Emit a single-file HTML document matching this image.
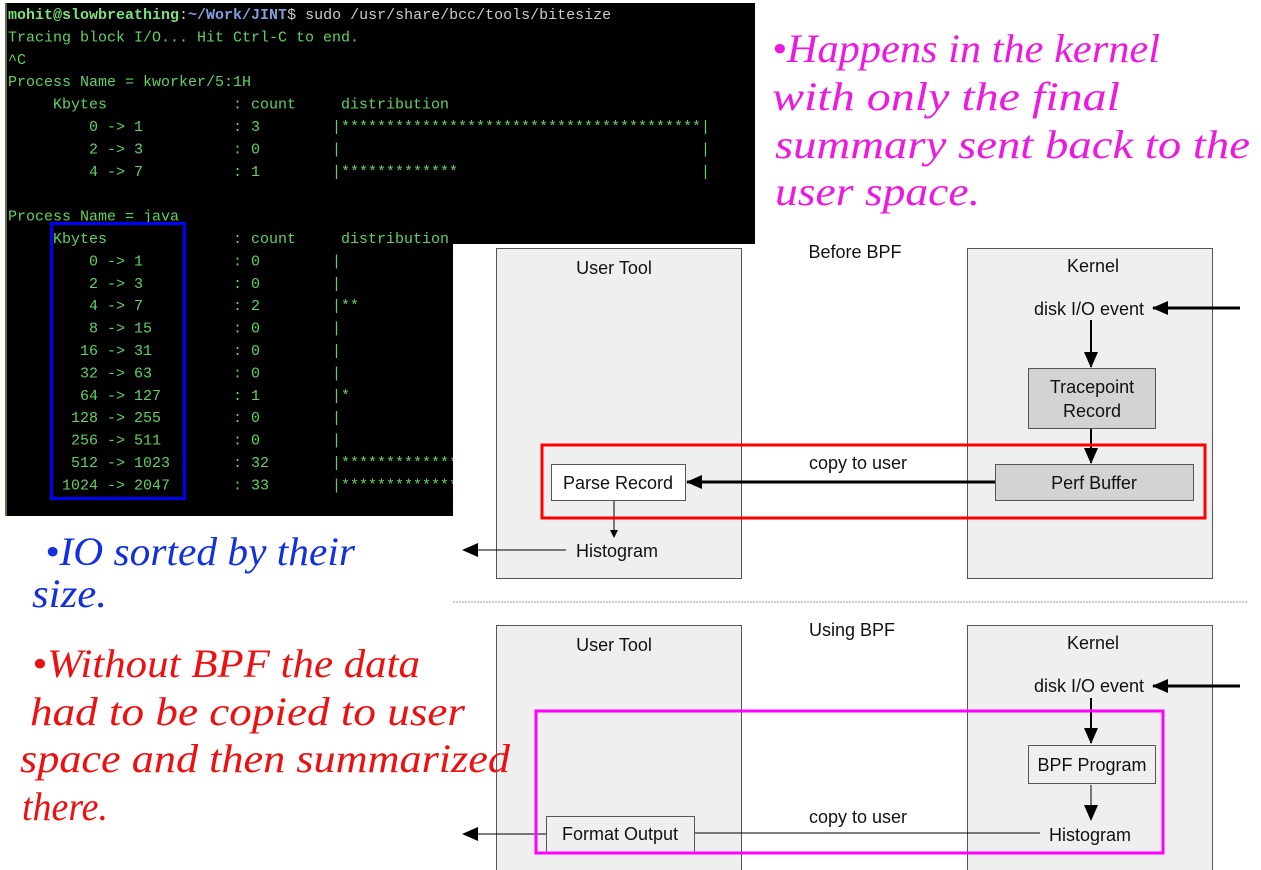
<!DOCTYPE html>
<html><head><meta charset="utf-8"><style>
html,body{margin:0;padding:0;background:#fff;}
svg{display:block}
.t text{font-family:"Liberation Mono",monospace;font-size:15px;fill:#5fd35f}
.d{font-family:"Liberation Sans",sans-serif;font-size:18px;fill:#111}
.h{font-family:"Liberation Serif",serif;font-style:italic;font-size:40px}
</style></head><body>
<svg width="1261" height="870" viewBox="0 0 1261 870" xmlns="http://www.w3.org/2000/svg">
<rect x="0" y="0" width="1261" height="870" fill="#fff"/>
<rect x="5" y="3" width="750" height="240" fill="#000"/>
<rect x="5" y="200" width="448" height="316" fill="#000"/>
<rect x="5" y="3" width="2" height="513" fill="#6a6a40"/>
<g class="t">
<text x="8" y="19"><tspan fill="#7de27d" font-weight="bold">mohit@slowbreathing</tspan><tspan fill="#ccc">:</tspan><tspan fill="#7f9fdc" font-weight="bold">~/Work/JINT</tspan><tspan fill="#ccc">$ sudo /usr/share/bcc/tools/bitesize</tspan></text>
<text x="8" y="41.4">Tracing block I/O... Hit Ctrl-C to end.</text>
<text x="8" y="63.8">^C</text>
<text x="8" y="86.2">Process Name = kworker/5:1H</text>
<text x="53" y="108.6">Kbytes</text><text x="233" y="108.6">: count</text><text x="341" y="108.6">distribution</text>
<text x="98" y="131" text-anchor="end">0</text><text x="107" y="131">-&gt;</text><text x="134" y="131">1</text><text x="233" y="131">: 3</text><text x="332" y="131">|****************************************|</text>
<text x="98" y="153.4" text-anchor="end">2</text><text x="107" y="153.4">-&gt;</text><text x="134" y="153.4">3</text><text x="233" y="153.4">: 0</text><text x="332" y="153.4">|</text><text x="701" y="153.4">|</text>
<text x="98" y="175.8" text-anchor="end">4</text><text x="107" y="175.8">-&gt;</text><text x="134" y="175.8">7</text><text x="233" y="175.8">: 1</text><text x="332" y="175.8">|*************</text><text x="701" y="175.8">|</text>
<text x="8" y="220.6">Process Name = java</text>
<text x="53" y="243">Kbytes</text><text x="233" y="243">: count</text><text x="341" y="243">distribution</text>
<g>
<text x="98" y="265.4" text-anchor="end">0</text><text x="107" y="265.4">-&gt;</text><text x="134" y="265.4">1</text><text x="233" y="265.4">: 0</text><text x="332" y="265.4">|</text>
<text x="98" y="287.8" text-anchor="end">2</text><text x="107" y="287.8">-&gt;</text><text x="134" y="287.8">3</text><text x="233" y="287.8">: 0</text><text x="332" y="287.8">|</text>
<text x="98" y="310.2" text-anchor="end">4</text><text x="107" y="310.2">-&gt;</text><text x="134" y="310.2">7</text><text x="233" y="310.2">: 2</text><text x="332" y="310.2">|**</text>
<text x="98" y="332.6" text-anchor="end">8</text><text x="107" y="332.6">-&gt;</text><text x="134" y="332.6">15</text><text x="233" y="332.6">: 0</text><text x="332" y="332.6">|</text>
<text x="98" y="355" text-anchor="end">16</text><text x="107" y="355">-&gt;</text><text x="134" y="355">31</text><text x="233" y="355">: 0</text><text x="332" y="355">|</text>
<text x="98" y="377.4" text-anchor="end">32</text><text x="107" y="377.4">-&gt;</text><text x="134" y="377.4">63</text><text x="233" y="377.4">: 0</text><text x="332" y="377.4">|</text>
<text x="98" y="399.8" text-anchor="end">64</text><text x="107" y="399.8">-&gt;</text><text x="134" y="399.8">127</text><text x="233" y="399.8">: 1</text><text x="332" y="399.8">|*</text>
<text x="98" y="422.2" text-anchor="end">128</text><text x="107" y="422.2">-&gt;</text><text x="134" y="422.2">255</text><text x="233" y="422.2">: 0</text><text x="332" y="422.2">|</text>
<text x="98" y="444.6" text-anchor="end">256</text><text x="107" y="444.6">-&gt;</text><text x="134" y="444.6">511</text><text x="233" y="444.6">: 0</text><text x="332" y="444.6">|</text>
<text x="98" y="467" text-anchor="end">512</text><text x="107" y="467">-&gt;</text><text x="134" y="467">1023</text><text x="233" y="467">: 32</text><text x="332" y="467">|**************************************</text>
<text x="98" y="489.4" text-anchor="end">1024</text><text x="107" y="489.4">-&gt;</text><text x="134" y="489.4">2047</text><text x="233" y="489.4">: 33</text><text x="332" y="489.4">|****************************************</text>
</g>
</g>
<rect x="51.5" y="223.5" width="133" height="275" fill="none" stroke="#0000ff" stroke-width="3"/>
<rect x="453" y="243" width="808" height="627" fill="#fff"/>
<rect x="453" y="243" width="302" height="1" fill="#000"/>

<defs><marker id="a" markerWidth="8" markerHeight="8" refX="7" refY="4" orient="auto" markerUnits="userSpaceOnUse"><path d="M0,0 L8,4 L0,8 z" fill="#000"/></marker>
<marker id="b" markerWidth="16" markerHeight="14" refX="15" refY="7" orient="auto" markerUnits="userSpaceOnUse"><path d="M0,0 L16,7 L0,14 z" fill="#000"/></marker></defs>

<!-- Before BPF -->
<rect x="496.5" y="248.5" width="245" height="330" fill="#efefef" stroke="#555"/>
<rect x="967.5" y="248.5" width="245" height="330" fill="#efefef" stroke="#555"/>
<text class="d" x="855" y="258" text-anchor="middle">Before BPF</text>
<text class="d" x="614" y="274" text-anchor="middle">User Tool</text>
<text class="d" x="1093" y="272" text-anchor="middle">Kernel</text>
<text class="d" x="1089" y="315" text-anchor="middle">disk I/O event</text>
<line x1="1240" y1="308" x2="1153" y2="308" stroke="#000" stroke-width="3" marker-end="url(#b)"/>
<line x1="1091" y1="320" x2="1091" y2="367" stroke="#000" stroke-width="2" marker-end="url(#b)"/>
<rect x="1028.5" y="368.5" width="127" height="60" fill="#d3d3d3" stroke="#555"/>
<text class="d" x="1092" y="393" text-anchor="middle">Tracepoint</text>
<text class="d" x="1092" y="417" text-anchor="middle">Record</text>
<line x1="1091" y1="429" x2="1091" y2="463" stroke="#000" stroke-width="2" marker-end="url(#b)"/>
<rect x="995.5" y="464.5" width="198" height="36" fill="#d3d3d3" stroke="#555"/>
<text class="d" x="1094" y="489" text-anchor="middle">Perf Buffer</text>
<rect x="551.5" y="464.5" width="134" height="36" fill="#fff" stroke="#555"/>
<text class="d" x="618" y="489" text-anchor="middle">Parse Record</text>
<line x1="995" y1="482" x2="687" y2="482" stroke="#000" stroke-width="3" marker-end="url(#b)"/>
<text class="d" x="858" y="469" text-anchor="middle" font-size="16">copy to user</text>
<line x1="614" y1="501" x2="614" y2="537" stroke="#000" stroke-width="1" marker-end="url(#a)"/>
<text class="d" x="617" y="557" text-anchor="middle">Histogram</text>
<line x1="566" y1="550" x2="463" y2="550" stroke="#000" stroke-width="1" marker-end="url(#b)"/>
<rect x="542" y="445" width="663" height="73" fill="none" stroke="#f00" stroke-width="3"/>
<line x1="453" y1="602" x2="1247" y2="602" stroke="#ccc" stroke-width="2" stroke-dasharray="2,1"/>

<!-- Using BPF -->
<rect x="496.5" y="625.5" width="245" height="260" fill="#efefef" stroke="#555"/>
<rect x="967.5" y="625.5" width="245" height="260" fill="#efefef" stroke="#555"/>
<text class="d" x="852" y="636" text-anchor="middle">Using BPF</text>
<text class="d" x="614" y="651" text-anchor="middle">User Tool</text>
<text class="d" x="1093" y="649" text-anchor="middle">Kernel</text>
<text class="d" x="1089" y="692" text-anchor="middle">disk I/O event</text>
<line x1="1240" y1="686" x2="1153" y2="686" stroke="#000" stroke-width="3" marker-end="url(#b)"/>
<line x1="1091" y1="698" x2="1091" y2="743" stroke="#000" stroke-width="2" marker-end="url(#b)"/>
<rect x="1028.5" y="745.5" width="127" height="38" fill="#efefef" stroke="#555"/>
<text class="d" x="1092" y="771" text-anchor="middle">BPF Program</text>
<line x1="1091" y1="785" x2="1091" y2="820" stroke="#000" stroke-width="1" marker-end="url(#b)"/>
<text class="d" x="1090" y="841" text-anchor="middle">Histogram</text>
<line x1="1040" y1="833" x2="694" y2="833" stroke="#000" stroke-width="1"/>
<text class="d" x="858" y="823" text-anchor="middle" font-size="16">copy to user</text>
<rect x="546.5" y="816.5" width="148" height="36" fill="#efefef" stroke="#555"/>
<text class="d" x="620" y="840" text-anchor="middle">Format Output</text>
<line x1="546" y1="834" x2="463" y2="834" stroke="#000" stroke-width="1" marker-end="url(#b)"/>
<rect x="536" y="711" width="627" height="142" fill="none" stroke="#f0f" stroke-width="3"/>

<!-- handwriting -->
<g class="h" fill="#ee18e0">
<text x="772" y="62" textLength="388" lengthAdjust="spacingAndGlyphs">•Happens in the kernel</text>
<text x="772" y="110" textLength="348" lengthAdjust="spacingAndGlyphs">with only the final</text>
<text x="775" y="158" textLength="475" lengthAdjust="spacingAndGlyphs">summary sent back to the</text>
<text x="775" y="205" textLength="205" lengthAdjust="spacingAndGlyphs">user space.</text>
</g>
<g class="h" fill="#1230e0">
<text x="45" y="565" textLength="310" lengthAdjust="spacingAndGlyphs">•IO sorted by their</text>
<text x="32" y="607" textLength="75" lengthAdjust="spacingAndGlyphs">size.</text>
</g>
<g class="h" fill="#ee1010">
<text x="32" y="677" textLength="388" lengthAdjust="spacingAndGlyphs">•Without BPF the data</text>
<text x="30" y="725" textLength="435" lengthAdjust="spacingAndGlyphs">had to be copied to user</text>
<text x="20" y="772" textLength="490" lengthAdjust="spacingAndGlyphs">space and then summarized</text>
<text x="22" y="820" textLength="86" lengthAdjust="spacingAndGlyphs">there.</text>
</g>
</svg>
</body></html>
